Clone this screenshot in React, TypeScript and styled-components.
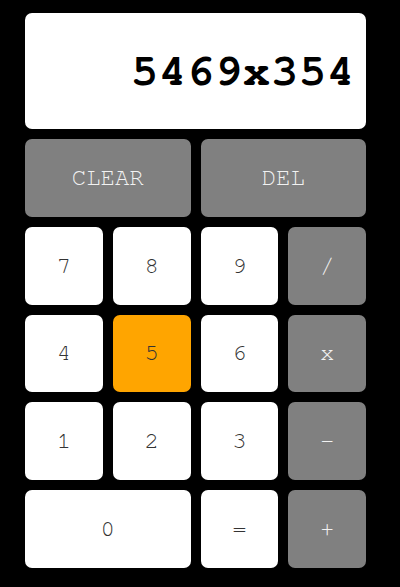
import React from "react";
import styled, { createGlobalStyle } from "styled-components";

const MONO = `"Nimbus Mono PS", "Nimbus Mono L", "FreeMono", "Courier 10 Pitch", "Courier New", Courier, "Liberation Mono", monospace`;

const Global = createGlobalStyle`
  html, body {
    margin: 0;
    padding: 0;
    background: #000;
  }
  body {
    font-family: ${MONO};
  }
`;

const Calculator = styled.div`
  width: 341px;
  margin: 13px 0 0 25px;
  display: flex;
  flex-direction: column;
  gap: 10px;
`;

const Display = styled.div`
  height: 116px;
  background: #fff;
  border-radius: 7px;
  display: flex;
  align-items: center;
  justify-content: flex-end;
  padding: 0 11px;
  box-sizing: border-box;
  font-family: ${MONO};
  font-weight: bold;
  font-size: 45px;
  letter-spacing: 1px;
  color: #000;
`;

const Keys = styled.div`
  display: grid;
  grid-template-columns: repeat(4, 1fr);
  grid-auto-rows: 77.8px;
  gap: 10px;
`;

type Variant = "num" | "op" | "active";

const Key = styled.button<{ $variant: Variant; $span?: number }>`
  grid-column: span ${(p) => p.$span ?? 1};
  border: none;
  border-radius: 7px;
  padding: 0;
  font-family: ${MONO};
  font-size: 24px;
  cursor: pointer;
  background: ${(p) =>
    p.$variant === "op" ? "#808080" : p.$variant === "active" ? "#ffa500" : "#fff"};
  color: ${(p) => (p.$variant === "op" ? "#f2f2f2" : "#333")};
`;

const keys: { label: string; variant: Variant; span?: number }[] = [
  { label: "CLEAR", variant: "op", span: 2 },
  { label: "DEL", variant: "op", span: 2 },
  { label: "7", variant: "num" },
  { label: "8", variant: "num" },
  { label: "9", variant: "num" },
  { label: "/", variant: "op" },
  { label: "4", variant: "num" },
  { label: "5", variant: "active" },
  { label: "6", variant: "num" },
  { label: "x", variant: "op" },
  { label: "1", variant: "num" },
  { label: "2", variant: "num" },
  { label: "3", variant: "num" },
  { label: "-", variant: "op" },
  { label: "0", variant: "num", span: 2 },
  { label: "=", variant: "num" },
  { label: "+", variant: "op" },
];

export default function App() {
  return (
    <>
      <Global />
      <Calculator>
        <Display>5469x354</Display>
        <Keys>
          {keys.map((k) => (
            <Key key={k.label} $variant={k.variant} $span={k.span}>
              {k.label}
            </Key>
          ))}
        </Keys>
      </Calculator>
    </>
  );
}
